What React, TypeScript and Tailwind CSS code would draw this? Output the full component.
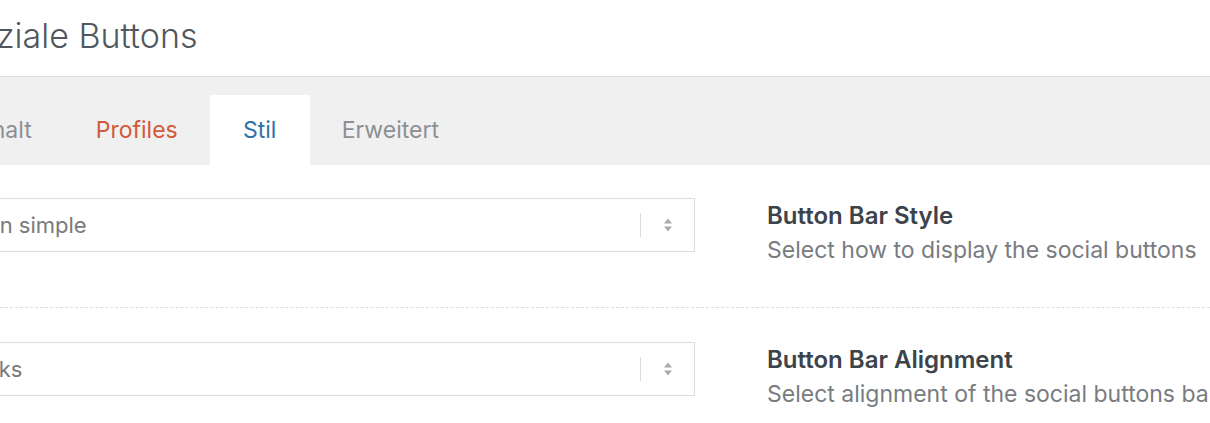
import React from "react";

function UpDown() {
  return (
    <svg width="14" height="20" viewBox="0 0 14 20" className="block">
      <path d="M7 3.5 L11 8.5 L3 8.5 Z" fill="#a7aaad" />
      <path d="M7 16.5 L11 11.5 L3 11.5 Z" fill="#a7aaad" />
    </svg>
  );
}

function Select({ value }: { value: string }) {
  return (
    <div className="flex h-[54px] w-[765px] shrink-0 items-center border border-[#dcdcde] bg-white">
      <div className="flex-1 pl-[37px] text-[22px] text-[#7a7a7a]">{value}</div>
      <div className="h-[24px] w-px bg-[#dcdcde]" />
      <div className="flex w-[53px] justify-center">
        <UpDown />
      </div>
    </div>
  );
}

function Row({ value, title, desc }: { value: string; title: string; desc: string }) {
  return (
    <div className="flex items-start gap-[72px]">
      <Select value={value} />
      <div className="pt-[3px]">
        <div className="whitespace-nowrap text-[24px] font-semibold leading-[30px] text-[#3c434a]">{title}</div>
        <div className="mt-[4px] whitespace-nowrap text-[23px] leading-[30px] text-[#787c82]">{desc}</div>
      </div>
    </div>
  );
}

export default function App() {
  return (
    <div className="h-[423px] w-[1210px] overflow-hidden bg-white font-['Inter',sans-serif]">
      <div className="ml-[-70px] w-[1400px]">
        <h1 className="pl-[25px] pt-[14px] text-[34px] font-light leading-[44px] text-[#50575e]">
          Soziale Buttons
        </h1>
        <div className="mt-[18px] flex h-[89px] items-end border-t border-[#dcdcde] bg-[#f0f0f0] pl-[10px]">
          <div className="flex h-[70px] items-center px-[32px] text-[23px] text-[#8c8f94]">Inhalt</div>
          <div className="flex h-[70px] items-center px-[32px] text-[23px] text-[#d2593a]">Profiles</div>
          <div className="flex h-[70px] w-[100px] items-center justify-center bg-white text-[23px] text-[#2e72a8]">Stil</div>
          <div className="flex h-[70px] items-center px-[32px] text-[23px] text-[#8c8f94]">Erweitert</div>
        </div>
        <div className="pt-[33px]">
          <Row
            value="Icon simple"
            title="Button Bar Style"
            desc="Select how to display the social buttons"
          />
          <div className="mb-[34px] mt-[42px] border-t border-dashed border-[#dcdcde]" />
          <Row
            value="Links"
            title="Button Bar Alignment"
            desc="Select alignment of the social buttons bar"
          />
        </div>
      </div>
    </div>
  );
}
